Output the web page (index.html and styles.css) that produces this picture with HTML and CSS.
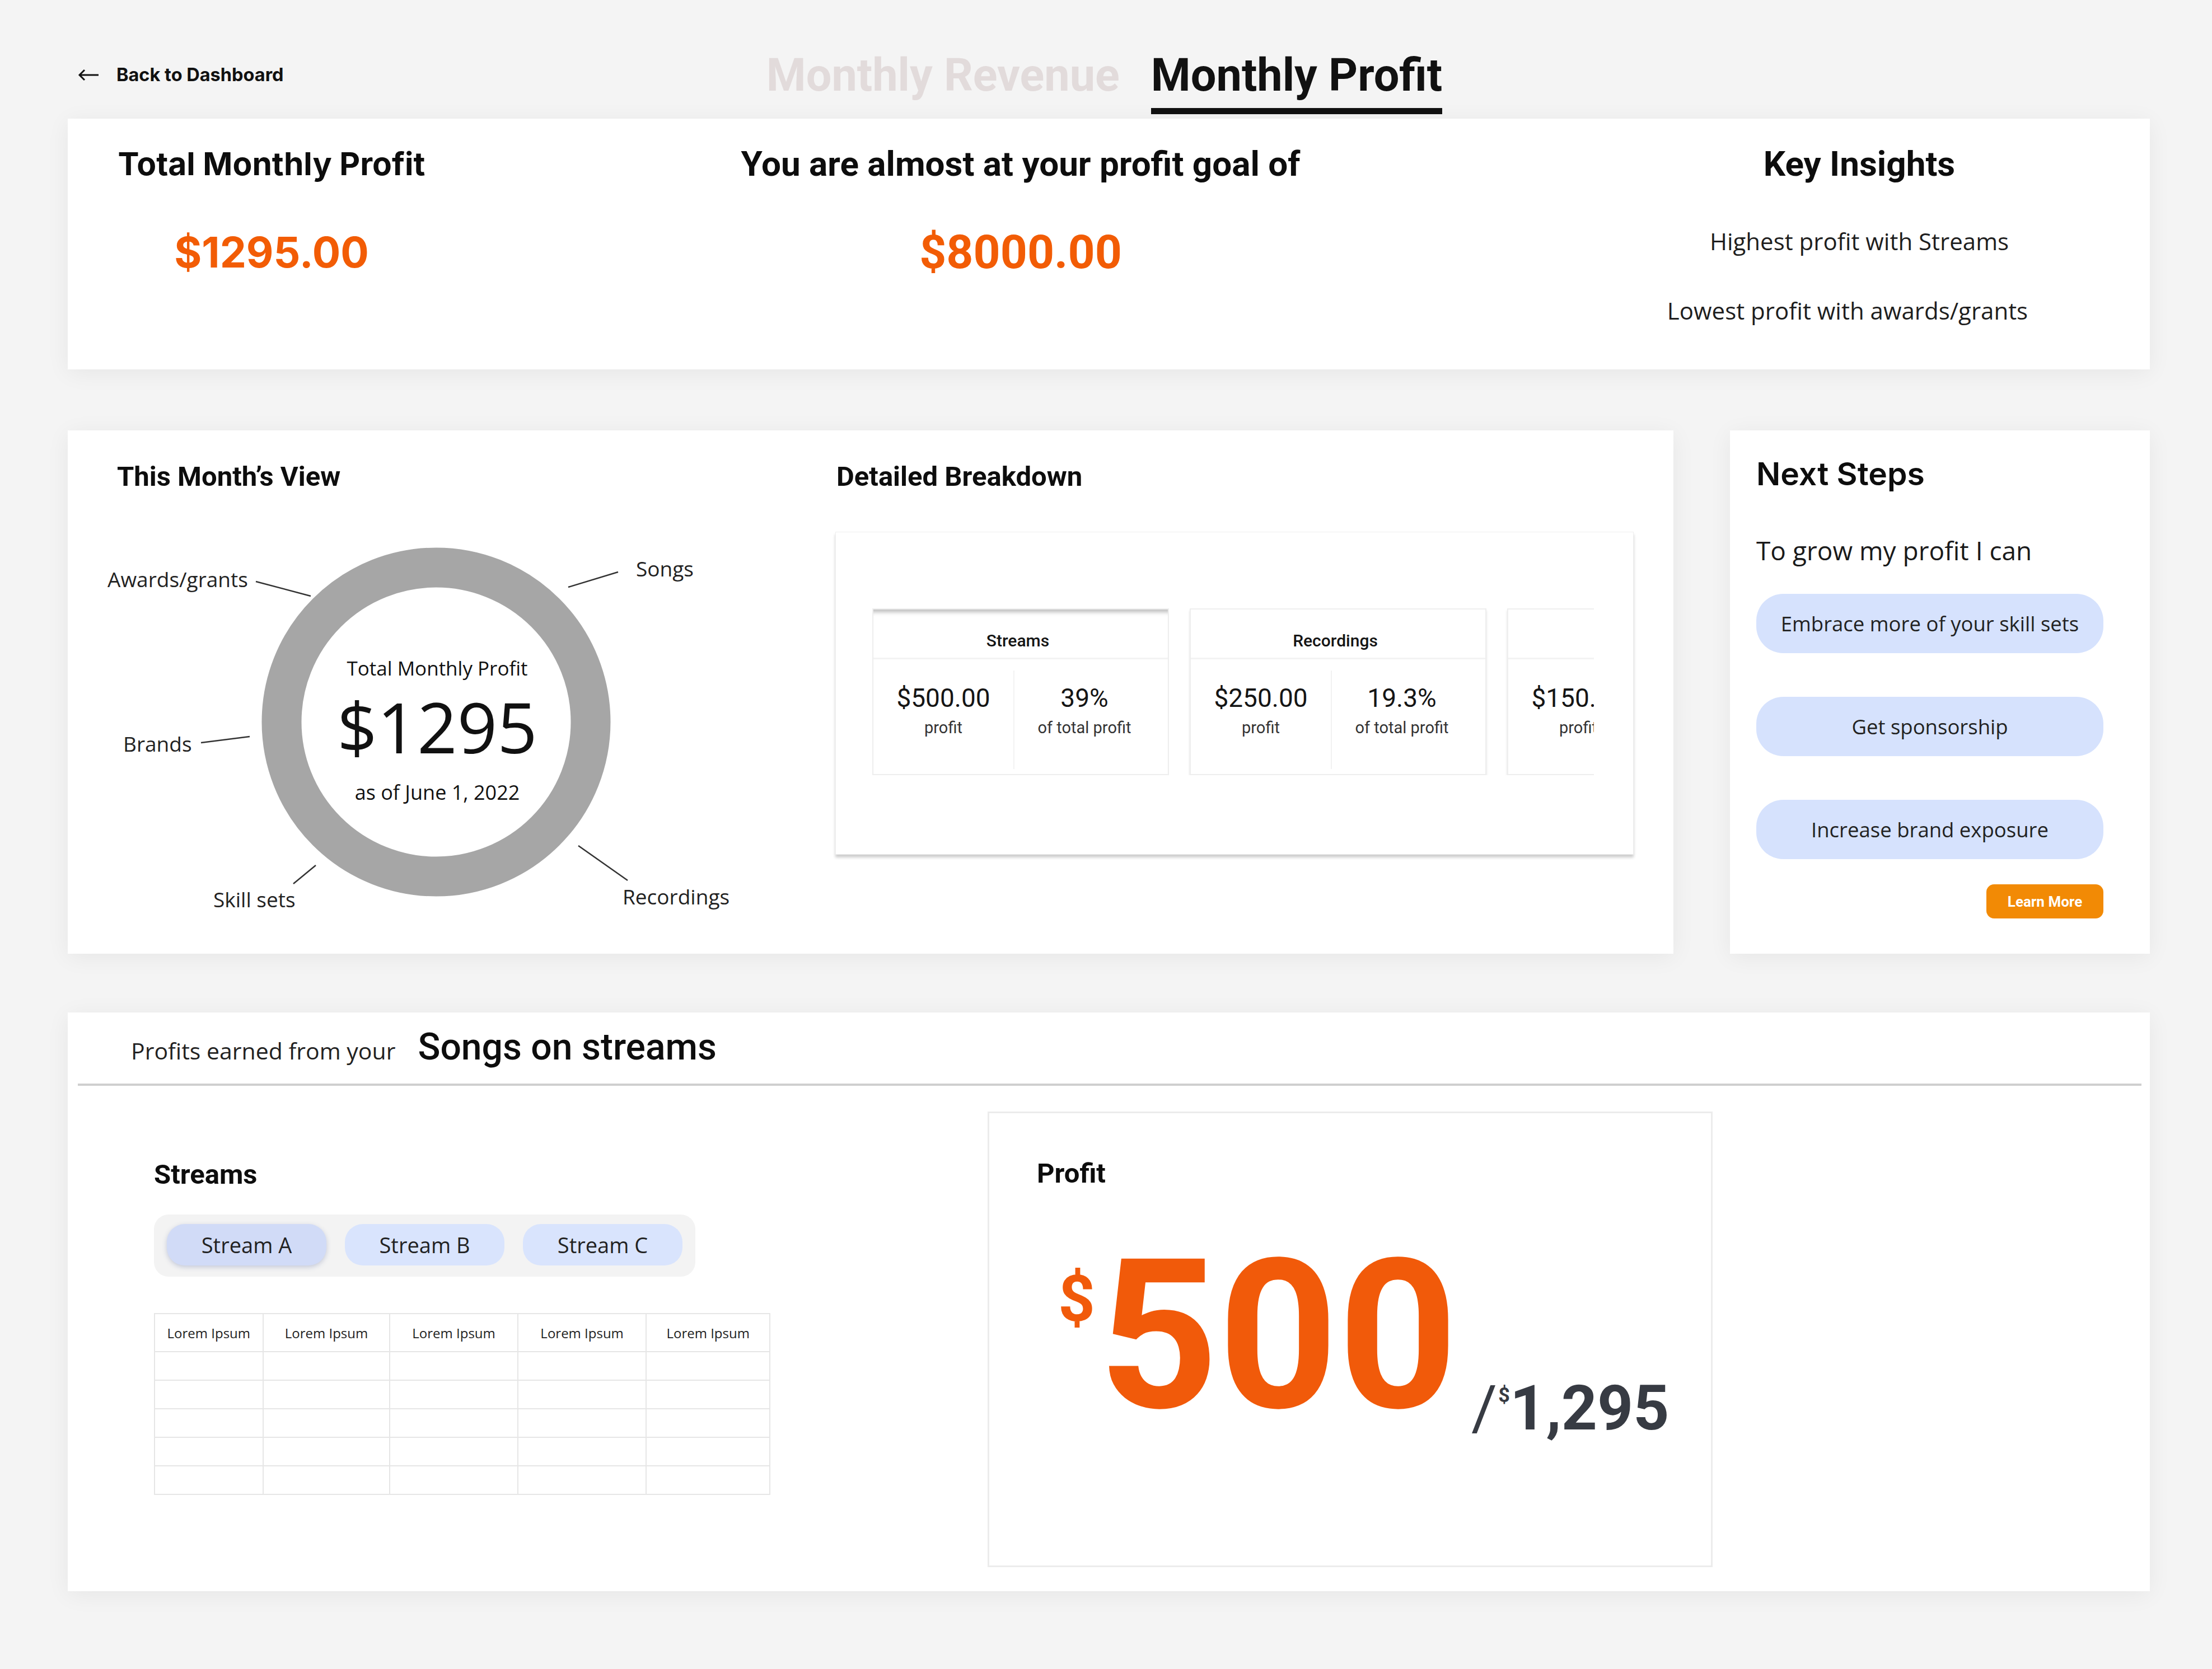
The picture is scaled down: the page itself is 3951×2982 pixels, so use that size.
FILE: index.html
```html
<!DOCTYPE html>
<html lang="en">
<head>
<meta charset="utf-8">
<title>Monthly Profit</title>
<link rel="stylesheet" href="styles.css">
</head>
<body>
<div class="page">
  <header class="topbar">
    <a class="back" href="#">
      <svg class="back-icon" viewBox="0 0 38 24"><path d="M37 12H3M12 3L3 12L12 21"/></svg>
      <span>Back to Dashboard</span>
    </a>
    <nav class="tabs">
      <span class="tab">Monthly Revenue</span>
      <span class="tab active">Monthly Profit</span>
    </nav>
    <div class="spacer"></div>
  </header>

  <section class="card summary">
    <div class="sum-col total">
      <h2>Total Monthly Profit</h2>
      <p class="amount">$1295.00</p>
    </div>
    <div class="sum-col goal">
      <h2>You are almost at your profit goal of</h2>
      <p class="amount">$8000.00</p>
    </div>
    <div class="sum-col insights">
      <h2>Key Insights</h2>
      <p>Highest profit with Streams</p>
      <p>Lowest profit with awards/grants</p>
    </div>
  </section>

  <div class="row2">
    <section class="card month">
      <div class="month-view">
        <h3>This Month’s View</h3>
        <div class="donut">
          <svg class="donut-svg" viewBox="0 0 1285 790">
            <circle cx="570" cy="390" r="276" class="ring"/>
            <line x1="248" y1="139" x2="346" y2="165"/>
            <line x1="806" y1="149" x2="895" y2="122"/>
            <line x1="150" y1="427" x2="237" y2="416"/>
            <line x1="315" y1="679" x2="355" y2="646"/>
            <line x1="824" y1="611" x2="912" y2="673"/>
          </svg>
          <span class="lbl lbl-awards">Awards/grants</span>
          <span class="lbl lbl-songs">Songs</span>
          <span class="lbl lbl-brands">Brands</span>
          <span class="lbl lbl-skills">Skill sets</span>
          <span class="lbl lbl-rec">Recordings</span>
          <div class="donut-center">
            <p class="dc-title">Total Monthly Profit</p>
            <p class="dc-value">$1295</p>
            <p class="dc-date">as of June 1, 2022</p>
          </div>
        </div>
      </div>
      <div class="breakdown">
        <h3>Detailed Breakdown</h3>
        <div class="bd-panel">
          <div class="bd-track">
            <div class="bd-card pressed">
              <div class="bd-head">Streams</div>
              <div class="bd-body">
                <div class="bd-half"><p class="bd-val">$500.00</p><p class="bd-sub">profit</p></div>
                <div class="bd-half"><p class="bd-val">39%</p><p class="bd-sub">of total profit</p></div>
              </div>
            </div>
            <div class="bd-card raised">
              <div class="bd-head">Recordings</div>
              <div class="bd-body">
                <div class="bd-half"><p class="bd-val">$250.00</p><p class="bd-sub">profit</p></div>
                <div class="bd-half"><p class="bd-val">19.3%</p><p class="bd-sub">of total profit</p></div>
              </div>
            </div>
            <div class="bd-card raised">
              <div class="bd-head">Brands</div>
              <div class="bd-body">
                <div class="bd-half"><p class="bd-val">$150.00</p><p class="bd-sub">profit</p></div>
                <div class="bd-half"><p class="bd-val">11.6%</p><p class="bd-sub">of total profit</p></div>
              </div>
            </div>
          </div>
        </div>
      </div>
    </section>

    <section class="card next">
      <h3>Next Steps</h3>
      <p class="lead">To grow my profit I can</p>
      <div class="steps">
        <a class="step" href="#">Embrace more of your skill sets</a>
        <a class="step" href="#">Get sponsorship</a>
        <a class="step" href="#">Increase brand exposure</a>
        <a class="learn" href="#">Learn More</a>
      </div>
    </section>
  </div>

  <section class="card songs">
    <div class="songs-head">
      <span class="pre">Profits earned from your</span>
      <h2>Songs on streams</h2>
    </div>
    <div class="rule"></div>
    <div class="songs-body">
      <div class="streams-col">
        <h3>Streams</h3>
        <div class="pill-group">
          <span class="pill on">Stream A</span>
          <span class="pill">Stream B</span>
          <span class="pill">Stream C</span>
        </div>
        <table class="grid-table">
          <thead>
            <tr><th>Lorem Ipsum</th><th>Lorem Ipsum</th><th>Lorem Ipsum</th><th>Lorem Ipsum</th><th>Lorem Ipsum</th></tr>
          </thead>
          <tbody>
            <tr><td></td><td></td><td></td><td></td><td></td></tr>
            <tr><td></td><td></td><td></td><td></td><td></td></tr>
            <tr><td></td><td></td><td></td><td></td><td></td></tr>
            <tr><td></td><td></td><td></td><td></td><td></td></tr>
            <tr><td></td><td></td><td></td><td></td><td></td></tr>
          </tbody>
        </table>
      </div>
      <div class="profit-box">
        <h3>Profit</h3>
        <div class="amount-line"><span class="cur">$</span><span class="big">500</span><span class="slash">/</span><span class="cur-sm">$</span><span class="total-val">1,295</span></div>
      </div>
    </div>
  </section>
</div>
</body>
</html>
```

FILE: styles.css
```css
* { box-sizing: border-box; margin: 0; padding: 0; }
html, body { background: #f4f4f4; }
body {
  font-family: "Open Sans", "Liberation Sans", sans-serif;
  color: #1c1c1c;
  width: 3951px;
  height: 2982px;
  overflow: hidden;
}
a { color: inherit; text-decoration: none; }

.page { padding: 0 111px 0 121px; }

/* top bar */
.topbar {
  display: grid;
  grid-template-columns: 1fr auto 1fr;
  align-items: start;
  height: 212px;
  padding-top: 87px;
}
.back {
  display: flex;
  align-items: center;
  gap: 31px;
  margin-top: 27px;
  padding-left: 18px;
  color: #111;
  font-family: "Inter", sans-serif;
  font-weight: 700;
  font-size: 32.5px;
  line-height: 40px;
  justify-self: start;
}
.back-icon { width: 38px; height: 24px; fill: none; stroke: #111; stroke-width: 3; }
.tabs {
  display: flex;
  gap: 56px;
  margin-left: -16px;
  font-family: "Roboto", sans-serif;
  font-weight: 700;
  font-size: 81px;
  line-height: 96px;
}
.tab { color: #e2dbdb; padding-bottom: 10px; border-bottom: 11px solid transparent; }
.tab.active { color: #111; border-bottom-color: #111; }

/* cards */
.card { background: #fff; box-shadow: 0 6px 40px rgba(0, 0, 0, 0.06); }

.summary { display: flex; height: 448px; padding: 44px 0 0 88px; }
.sum-col { text-align: center; }
.sum-col h2 {
  font-family: "Roboto", sans-serif;
  font-weight: 700;
  font-size: 62px;
  line-height: 74px;
  color: #0d0d0d;
  white-space: nowrap;
}
.amount {
  margin-top: 73px;
  font-weight: 700;
  font-size: 82px;
  line-height: 96px;
  color: #f25c05;
}
.total { width: 552px; }
.total h2 { font-family: "Inter", sans-serif; font-size: 57px; }
.total .amount { font-family: "Inter", sans-serif; font-size: 75px; }
.goal { width: 1000px; margin-left: 562px; }
.goal .amount { font-family: "Roboto", sans-serif; font-size: 84px; }
.insights { width: 680px; margin-left: 658px; }
.insights p { margin-top: 78px; font-size: 42px; line-height: 46px; color: #1e1e1e; white-space: nowrap; }
.insights p + p { margin-top: 78px; }
.insights p:last-child { margin-left: -42px; }

/* row 2 */
.row2 { display: flex; gap: 101px; margin-top: 109px; height: 935px; }
.month {
  width: 2868px;
  display: grid;
  grid-template-columns: 1285px 1424px;
  padding: 54px 0 0 88px;
}
.month h3, .breakdown h3, .streams-col h3, .profit-box h3 {
  font-family: "Roboto", sans-serif;
  font-weight: 700;
  font-size: 49px;
  line-height: 58px;
  color: #0d0d0d;
}

.donut { position: relative; height: 790px; margin-top: 19px; }
.donut-svg { position: absolute; left: 0; top: 0; width: 1285px; height: 790px; overflow: visible; }
.donut-svg .ring { fill: none; stroke: #a6a6a6; stroke-width: 71; }
.donut-svg line { stroke: #333; stroke-width: 2.5; }
.lbl {
  position: absolute;
  font-size: 37px;
  line-height: 44px;
  color: #222;
  white-space: nowrap;
  transform: translateY(-50%);
}
.lbl-awards { left: -17px; top: 135px; }
.lbl-songs { left: 927px; top: 116px; }
.lbl-brands { left: 11px; top: 429px; }
.lbl-skills { left: 172px; top: 707px; }
.lbl-rec { left: 903px; top: 702px; }
.donut-center {
  position: absolute;
  left: 572px;
  top: 272px;
  transform: translateX(-50%);
  text-align: center;
  white-space: nowrap;
  color: #111;
}
.dc-title { font-size: 35px; line-height: 44px; }
.dc-value { margin-top: 20px; font-size: 125px; line-height: 124px; }
.dc-date { margin-top: 34px; font-size: 36px; line-height: 44px; }

.bd-panel {
  margin-top: 69px;
  margin-left: -2px;
  width: 1426px;
  height: 577px;
  padding: 136px 70px 0 65px;
  border: 1px solid #efefef;
  box-shadow: 0 5px 5px rgba(0, 0, 0, 0.2);
}
.bd-track { display: flex; gap: 37px; overflow: hidden; }
.bd-card {
  flex: 0 0 530px;
  height: 298px;
  background: #fff;
  border: 2px solid #eeeeee;
  display: flex;
  flex-direction: column;
  font-family: "Roboto", sans-serif;
  color: #151515;
}
.bd-card.pressed { box-shadow: inset 0 11px 7px -6px rgba(0, 0, 0, 0.25); }
.bd-card.raised { box-shadow: 0 4px 4px rgba(0, 0, 0, 0.13); }
.bd-head {
  height: 89px;
  padding: 38px 10px 0 0;
  text-align: center;
  font-weight: 500;
  font-size: 30px;
  line-height: 36px;
  border-bottom: 3px solid #f3f3f3;
}
.bd-body { flex: 1; display: flex; padding: 20px 24px 9px 0; }
.bd-half { flex: 1; padding-top: 22px; text-align: center; white-space: nowrap; }
.bd-half + .bd-half { border-left: 2px solid #f2f2f2; }
.bd-val { font-size: 46px; line-height: 54px; }
.bd-sub { margin-top: 8px; font-size: 29px; line-height: 36px; color: #333; }

/* next steps */
.next { flex: 1; padding: 44px 83px 0 47px; }
.next h3 { font-family: "Inter", sans-serif; font-weight: 600; font-size: 57px; line-height: 68px; color: #0d0d0d; }
.lead { margin-top: 74px; font-size: 46px; line-height: 56px; color: #1a1a1a; }
.steps { display: flex; flex-direction: column; gap: 78px; margin-top: 50px; }
.step {
  height: 106px;
  border-radius: 48px;
  background: #d6e2fd;
  display: flex;
  align-items: center;
  justify-content: center;
  font-size: 36.5px;
  color: #222;
}
.learn {
  align-self: flex-end;
  margin-top: -33px;
  width: 209px;
  height: 61px;
  border-radius: 14px;
  background: #f28a05;
  color: #fff;
  display: flex;
  align-items: center;
  justify-content: center;
  font-family: "Roboto", sans-serif;
  font-weight: 700;
  font-size: 26px;
}

/* songs card */
.songs { margin-top: 105px; height: 1034px; }
.songs-head { display: flex; align-items: baseline; gap: 40px; padding: 22px 113px 0; }
.songs-head .pre { font-size: 41px; line-height: 56px; color: #222; }
.songs-head h2 { font-family: "Roboto", sans-serif; font-weight: 500; font-size: 66px; line-height: 80px; color: #0d0d0d; }
.rule { margin: 25px 15px 0 18px; border-top: 4px solid #cfcfcf; }
.songs-body { display: flex; padding-left: 154px; }
.streams-col { width: 1103px; padding-top: 130px; }
.pill-group {
  display: inline-flex;
  gap: 33px;
  margin-top: 42px;
  padding: 17px 23px 20px;
  background: #f3f3f3;
  border-radius: 26px;
}
.pill {
  width: 285px;
  height: 74px;
  border-radius: 32px;
  background: #d9e4fd;
  display: flex;
  align-items: center;
  justify-content: center;
  font-size: 38px;
  color: #222;
}
.pill.on { background: #d1dbf7; box-shadow: 0 3px 8px rgba(60, 80, 140, 0.25); }

.grid-table { margin-top: 65px; width: 1101px; border-collapse: collapse; }
.grid-table th, .grid-table td { border: 2px solid #e6e6e6; }
.grid-table th {
  height: 68px;
  padding: 0;
  text-align: center;
  font-weight: 400;
  font-size: 24px;
  color: #222;
}
.grid-table td { height: 51px; }
.grid-table th:nth-child(1) { width: 194px; }
.grid-table th:nth-child(2) { width: 227px; }
.grid-table th:nth-child(3) { width: 229px; }
.grid-table th:nth-child(4) { width: 230px; }
.grid-table th:nth-child(5) { width: 221px; }

.profit-box {
  margin-left: 386px;
  margin-top: 46px;
  width: 1295px;
  height: 814px;
  border: 3px solid #ececec;
  padding: 79px 0 0 85px;
}
.amount-line {
  margin-top: 74px;
  margin-left: 38px;
  font-family: "Roboto", sans-serif;
  font-weight: 700;
  font-size: 0;
  line-height: 1;
  white-space: nowrap;
}
.cur { font-size: 115px; color: #f15a0a; vertical-align: 154px; margin-right: 6px; }
.big { font-size: 373px; color: #f15a0a; }
.slash { font-size: 112px; font-weight: 400; color: #373b43; vertical-align: -40px; margin-left: 24px; }
.cur-sm { font-size: 36px; color: #373b43; vertical-align: 9px; margin-left: 2px; }
.total-val { font-size: 112px; color: #373b43; vertical-align: -40px; margin-left: 0; }
```
